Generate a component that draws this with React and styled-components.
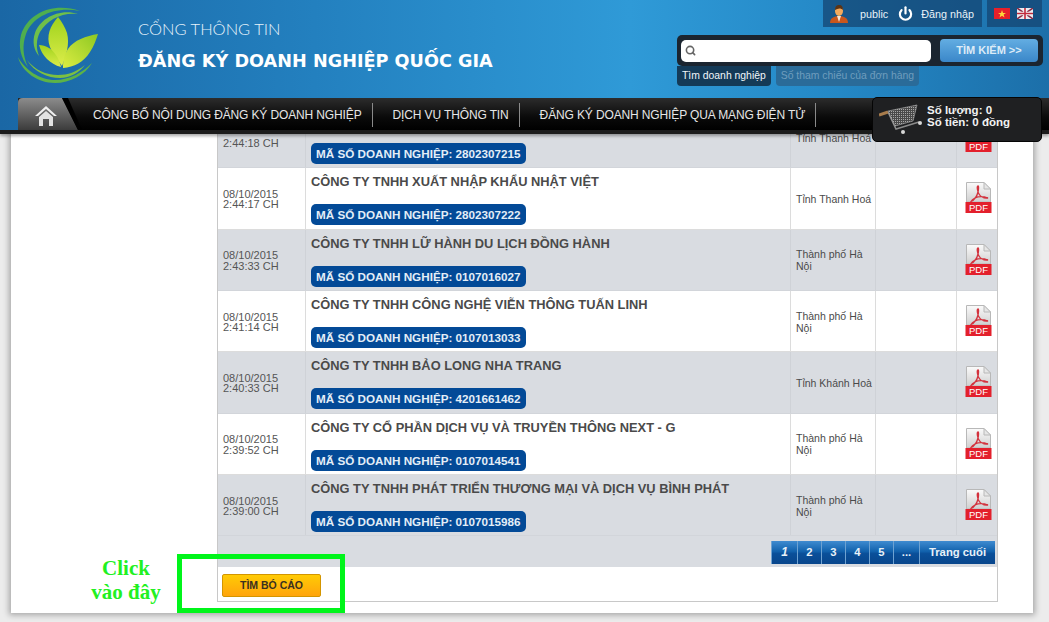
import React from 'react'
import styled, { createGlobalStyle } from 'styled-components'
import { Power, Search } from 'lucide-react'

const GlobalStyle = createGlobalStyle`
  html, body {
    margin: 0;
    padding: 0;
    background: #ececec;
    font-family: 'Liberation Sans', Arial, sans-serif;
  }
`

const Page = styled.div`
  position: relative;
  width: 1049px;
  height: 622px;
  overflow: hidden;
`

const Header = styled.header`
  position: relative;
  z-index: 2;
  height: 130px;
  background: linear-gradient(90deg, #1a67a5 0%, #2380bf 30%, #2f9ad7 60%, #2488c6 80%, #1c6fa9 100%);
  border-bottom: 4px solid #1c1c1c;
  box-shadow: 0 2px 3px rgba(0, 0, 0, 0.35);
`

const TopBar = styled.div`
  display: flex;
  height: 98px;
`

const LogoMark = styled.svg`
  flex: none;
  width: 110px;
  height: 98px;
`

const Brand = styled.div`
  margin-left: 28px;
  padding-top: 19px;
  color: #fff;
`

const BrandSmall = styled.div`
  font-family: Lato, sans-serif;
  font-weight: 300;
  font-size: 16.5px;
  line-height: 20px;
  color: #e6f2fa;
`

const BrandBig = styled.div`
  margin-top: 11px;
  font-family: 'DejaVu Sans', sans-serif;
  font-weight: 700;
  font-size: 17.65px;
  line-height: 22px;
`

const RightBlock = styled.div`
  margin-left: auto;
  width: 366px;
  margin-right: 6px;
`

const UserRow = styled.div`
  display: flex;
  justify-content: flex-end;
  gap: 5px;
  height: 27px;
  margin: 0 1px 8px 0;
`

const UserBox = styled.div`
  display: flex;
  align-items: center;
  width: 159px;
  padding-left: 7px;
  box-sizing: border-box;
  background: rgba(20, 70, 115, 0.75);
  color: #e8f1f8;
  font-size: 10.8px;
`

const UserName = styled.span`
  margin-left: 12px;
  margin-right: 10px;
`

const LoginLink = styled.span`
  margin-left: 8px;
`

const FlagBox = styled.div`
  display: flex;
  align-items: center;
  gap: 7px;
  width: 55px;
  padding-left: 7px;
  box-sizing: border-box;
  background: rgba(20, 70, 115, 0.75);
`

const SearchBar = styled.div`
  display: flex;
  align-items: center;
  height: 31px;
  padding: 0 5px 0 4px;
  box-sizing: border-box;
  background: #1b2530;
  border-radius: 5px;
`

const SearchInput = styled.div`
  display: flex;
  align-items: center;
  width: 250px;
  height: 22px;
  padding-left: 4px;
  box-sizing: border-box;
  background: #fff;
  border-radius: 5px;
  color: #666;
`

const SearchButton = styled.div`
  margin-left: 9px;
  width: 98px;
  height: 23px;
  border-radius: 4px;
  background: linear-gradient(180deg, #63ade2, #3a87c9);
  color: #dcebf7;
  font-size: 11px;
  font-weight: 700;
  line-height: 23px;
  text-align: center;
`

const SearchTabs = styled.div`
  display: flex;
  gap: 5px;
`

const SearchTab = styled.div`
  height: 20px;
  padding: 0 5px;
  border-radius: 0 0 4px 4px;
  font-size: 10.4px;
  line-height: 20px;
  background: ${p => (p.$active ? '#143a57' : '#2a6b99')};
  color: ${p => (p.$active ? '#f0f6fa' : '#6f9dbd')};
`

const Nav = styled.nav`
  display: flex;
  align-items: flex-start;
  height: 32px;
  margin-left: 18px;
  background: linear-gradient(180deg, #2c2c2c 0%, #0a0a0a 60%, #000 100%);
`

const HomeTab = styled.div`
  flex: none;
  display: flex;
  width: 64px;
  height: 32px;
  margin-right: 1px;
`

const HomeIcon = styled.svg`
  width: 64px;
  height: 32px;
`

const NavItem = styled.div`
  padding: 0 10px;
  margin: 5px 10px 0 0;
  border-right: 1px solid #8a8a8a;
  height: 24px;
  line-height: 25px;
  font-size: 12px;
  letter-spacing: -0.13px;
  color: #e6e6e6;
  white-space: nowrap;
`

const CartBox = styled.div`
  position: absolute;
  top: 97px;
  left: 872px;
  display: flex;
  align-items: center;
  width: 170px;
  height: 45px;
  box-sizing: border-box;
  padding-left: 6px;
  background: #1f2022;
  border: 1px solid #050505;
  border-radius: 5px;
  color: #f2f2f2;
  font-size: 11.5px;
  font-weight: 700;
  line-height: 12px;
`

const CartText = styled.div`
  margin-left: 4px;
  padding-bottom: 7px;
`

const Sheet = styled.main`
  margin: 0 16px 0 11px;
  height: 479px;
  padding-left: 206px;
  padding-right: 35px;
  background: #fff;
  box-shadow: 0 0 6px 2px rgba(0, 0, 0, 0.3);
`

const Panel = styled.section`
  display: flow-root;
  height: 468px;
  border: 1px solid #c8c8c8;
  border-top: 0;
  box-sizing: border-box;
  width: 781px;
`

const RowList = styled.div`
  margin-top: -27px;
`

const Row = styled.div`
  display: grid;
  grid-template-columns: 88px 485px 85px 81px 1fr;
  height: 61.33px;
  background: ${p => (p.$shaded ? '#d9dce1' : '#fff')};
  border-bottom: 1px solid ${p => (p.$shaded ? '#d2d5da' : '#dcdcdc')};
  box-sizing: border-box;
`

const Cell = styled.div`
  display: flex;
  align-items: center;
  padding: 1px 0 0 5px;
  border-right: 1px solid ${p => (p.$shaded ? '#cfd2d7' : '#dcdcdc')};
  color: #4a4a4a;
  font-size: 10.5px;
  line-height: 12px;
`

const DateText = styled.div`
  padding-top: 1px;
  font-size: 11px;
  line-height: 10.5px;
  color: #555;
`

const DateLine = styled.div`
  height: 10.5px;
`

const NameCell = styled.div`
  padding: 6px 0 0 5px;
  border-right: 1px solid ${p => (p.$shaded ? '#cfd2d7' : '#dcdcdc')};
`

const CompanyName = styled.div`
  height: 30px;
  font-size: 12.85px;
  font-weight: 700;
  line-height: 16px;
  color: #4a4a4a;
`

const CodeBadge = styled.span`
  display: inline-block;
  height: 21px;
  padding: 0 5px;
  border-radius: 5px;
  background: #034a97;
  color: #e4eef7;
  font-size: 11.7px;
  font-weight: 700;
  line-height: 21px;
`

const PdfCell = styled.div`
  display: flex;
  align-items: center;
  padding: 0 0 0 8px;
`

const PdfGlyph = styled.svg`
  width: 27px;
  height: 32px;
`

const Pager = styled.div`
  display: flex;
  justify-content: flex-end;
  height: 31px;
  padding: 5px 2px 0 0;
  box-sizing: border-box;
  background: #d9dce1;
`

const PageLink = styled.div`
  width: ${p => p.$width || 24}px;
  height: 23px;
  border-left: 1px solid #6ea2d2;
  box-sizing: border-box;
  background: linear-gradient(180deg, #3f8bd0 0%, #1262ad 45%, #0a4f99 55%, #08468c 100%);
  color: #e8f1f8;
  font-size: ${p => (p.$current ? 12 : 11.3)}px;
  font-weight: 700;
  font-style: ${p => (p.$current ? 'italic' : 'normal')};
  line-height: 22px;
  text-align: center;
`

const PanelFooter = styled.div`
  padding: 7px 0 0 4px;
`

const ReportButton = styled.div`
  width: 99px;
  height: 23px;
  box-sizing: border-box;
  border: 1px solid #d39500;
  border-radius: 2px;
  background: linear-gradient(180deg, #ffcb05, #ffa40c);
  color: #3a3020;
  font-size: 10.5px;
  font-weight: 700;
  line-height: 21px;
  text-align: center;
`

const Highlight = styled.div`
  position: absolute;
  left: 177px;
  top: 554px;
  width: 168px;
  height: 59px;
  box-sizing: border-box;
  border: 5px solid #00f51a;
`

const Callout = styled.div`
  position: absolute;
  left: 76px;
  top: 556px;
  width: 100px;
  font-family: 'Liberation Serif', serif;
  font-size: 21px;
  font-weight: 700;
  line-height: 24px;
  text-align: center;
  color: #22f022;
`

const rows = [
  { date: '', time: '2:44:18 CH', name: '', code: '2802307215', city: 'Tỉnh Thanh Hoá', shaded: true },
  { date: '08/10/2015', time: '2:44:17 CH', name: 'CÔNG TY TNHH XUẤT NHẬP KHẨU NHẬT VIỆT', code: '2802307222', city: 'Tỉnh Thanh Hoá' },
  { date: '08/10/2015', time: '2:43:33 CH', name: 'CÔNG TY TNHH LỮ HÀNH DU LỊCH ĐỒNG HÀNH', code: '0107016027', city: 'Thành phố Hà Nội', shaded: true },
  { date: '08/10/2015', time: '2:41:14 CH', name: 'CÔNG TY TNHH CÔNG NGHỆ VIỄN THÔNG TUẤN LINH', code: '0107013033', city: 'Thành phố Hà Nội' },
  { date: '08/10/2015', time: '2:40:33 CH', name: 'CÔNG TY TNHH BẢO LONG NHA TRANG', code: '4201661462', city: 'Tỉnh Khánh Hoà', shaded: true },
  { date: '08/10/2015', time: '2:39:52 CH', name: 'CÔNG TY CỔ PHẦN DỊCH VỤ VÀ TRUYỀN THÔNG NEXT - G', code: '0107014541', city: 'Thành phố Hà Nội' },
  { date: '08/10/2015', time: '2:39:00 CH', name: 'CÔNG TY TNHH PHÁT TRIỂN THƯƠNG MẠI VÀ DỊCH VỤ BÌNH PHÁT', code: '0107015986', city: 'Thành phố Hà Nội', shaded: true },
]

const Logo = () => (
  <LogoMark viewBox="0 0 110 98">
    <defs>
      <linearGradient id="leafA" x1="0" y1="0" x2="0" y2="1">
        <stop offset="0" stopColor="#9fd31c" />
        <stop offset="1" stopColor="#dcec4a" />
      </linearGradient>
      <linearGradient id="leafB" x1="1" y1="0" x2="0" y2="1">
        <stop offset="0" stopColor="#8cc822" />
        <stop offset="1" stopColor="#dcec42" />
      </linearGradient>
    </defs>
    <path d="M80 11C55 2 28 12 21 35 18 47 21 58 28 67 23 56 22 45 26 34 33 15 57 6 80 11Z" fill="#4faf4e" />
    <path d="M78 14C60 8 40 18 35 33 32 42 34 50 39 56 36 48 36 40 40 32 47 20 62 12 78 14Z" fill="#6fc04a" />
    <path d="M18 57C22 72 38 83 55 83 70 83 85 75 92 63 83 72 70 80 55 80 40 80 25 70 18 57Z" fill="#5cb347" />
    <path d="M27 60C34 72 48 78 60 78 70 78 80 72 85 65 76 72 68 75 58 75 46 75 35 70 27 60Z" fill="#7cc041" />
    <path d="M58 17C50 26 46 36 50 47 53 55 58 60 62 66 66 56 70 44 67 33 65 27 62 22 58 17Z" fill="url(#leafA)" />
    <path d="M39 45C42 56 50 64 61 67 59 58 54 51 49 48 46 46 42 45 39 45Z" fill="url(#leafA)" />
    <path d="M98 34C86 36 74 40 68 49 64 55 63 61 63 68 74 67 84 62 90 52 94 46 96 40 98 34Z" fill="url(#leafB)" />
  </LogoMark>
)

const Home = () => (
  <HomeIcon viewBox="0 0 64 32">
    <defs>
      <linearGradient id="tabFill" x1="0" y1="0" x2="0" y2="1">
        <stop offset="0" stopColor="#8c8c8c" />
        <stop offset="1" stopColor="#3c3c3c" />
      </linearGradient>
    </defs>
    <path d="M5 0H44L60 32H0V5Q0 0 5 0Z" fill="url(#tabFill)" />
    <path d="M44 0H50L64 32H60Z" fill="#000" />
    <path d="M28 8L17 18H20L28 11 36 18H39Z" fill="#f0f0f0" />
    <path d="M21 19L28 13 35 19V28H31V21H25V28H21Z" fill="#e2e2e2" />
  </HomeIcon>
)

const Avatar = () => (
  <svg width="18" height="20" viewBox="0 0 18 20">
    <path d="M0 19C0 14 4 12 9 12 14 12 18 14 18 19Z" fill="#c8561c" />
    <path d="M7 12H11L9 18Z" fill="#f2e6d8" />
    <ellipse cx="9" cy="7" rx="4" ry="5" fill="#f2a95c" />
    <path d="M5 6C5 2 7 1 9 1 12 1 13 3 13 6 11 4 8 4 5 6Z" fill="#5b3416" />
  </svg>
)

const VietnamFlag = () => (
  <svg width="16" height="11" viewBox="0 0 16 11">
    <rect width="16" height="11" fill="#e8202a" />
    <path d="M8 2L9 5H12L9.6 6.6 10.5 9.5 8 7.8 5.5 9.5 6.4 6.6 4 5H7Z" fill="#ffd83a" />
  </svg>
)

const UkFlag = () => (
  <svg width="16" height="11" viewBox="0 0 16 11">
    <rect width="16" height="11" fill="#e9e9ef" />
    <path d="M0 0L16 11M16 0L0 11" stroke="#8b2a44" strokeWidth="1.5" />
    <path d="M8 0V11M0 5.5H16" stroke="#f4f4f4" strokeWidth="3.4" />
    <path d="M8 0V11M0 5.5H16" stroke="#c22a3c" strokeWidth="1.6" />
  </svg>
)

const Cart = () => (
  <svg width="44" height="34" viewBox="0 0 44 34">
    <defs>
      <pattern id="mesh" width="2" height="2" patternUnits="userSpaceOnUse">
        <rect width="2" height="2" fill="#4a4a4a" />
        <rect width="1" height="1" fill="#a8a8a8" />
      </pattern>
    </defs>
    <path d="M9 9L17 26 40 19" fill="none" stroke="#8a8a8a" strokeWidth="1.5" />
    <path d="M0 12L9 9" stroke="#a87c4c" strokeWidth="3" />
    <path d="M9 8L38 2 34 18 16 23Z" fill="url(#mesh)" stroke="#b4b4b4" strokeWidth="0.6" />
    <circle cx="24" cy="29" r="2" fill="#d8d8d8" />
    <circle cx="41" cy="20" r="2" fill="#d8d8d8" />
  </svg>
)

const Pdf = () => (
  <PdfGlyph viewBox="0 0 27 32">
    <defs>
      <linearGradient id="sheetFill" x1="0" y1="0" x2="0" y2="1">
        <stop offset="0" stopColor="#fbfbfb" />
        <stop offset="1" stopColor="#cfcfcf" />
      </linearGradient>
    </defs>
    <path d="M1.5 0.5H19L25.5 7V20H1.5Z" fill="url(#sheetFill)" stroke="#b8b8b8" />
    <path d="M19 0.5V7H25.5Z" fill="#e6e6e6" stroke="#b8b8b8" />
    <path d="M13 4C11.5 4 12.5 10 14 12 15.5 14.5 19 16.5 23 16 19 14.5 14 14 10 16 8 17 6.5 18.5 6 19.5 9 18 12 14 13 10 13.5 8 14 4 13 4Z" fill="none" stroke="#d3313c" strokeWidth="1.3" />
    <rect x="0.5" y="20" width="26" height="11" fill="#e3202c" />
    <text x="13.5" y="29" fontFamily="Liberation Sans, sans-serif" fontSize="9.5" fill="#fff" textAnchor="middle">PDF</text>
  </PdfGlyph>
)

export default function App() {
  return (
    <Page>
      <GlobalStyle />
      <Header>
        <TopBar>
          <Logo />
          <Brand>
            <BrandSmall>CỔNG THÔNG TIN</BrandSmall>
            <BrandBig>ĐĂNG KÝ DOANH NGHIỆP QUỐC GIA</BrandBig>
          </Brand>
          <RightBlock>
            <UserRow>
              <UserBox>
                <Avatar />
                <UserName>public</UserName>
                <Power size={15} strokeWidth={3.5} color="#fff" />
                <LoginLink>Đăng nhập</LoginLink>
              </UserBox>
              <FlagBox>
                <VietnamFlag />
                <UkFlag />
              </FlagBox>
            </UserRow>
            <SearchBar>
              <SearchInput>
                <Search size={11} strokeWidth={3.5} />
              </SearchInput>
              <SearchButton>TÌM KIẾM &gt;&gt;</SearchButton>
            </SearchBar>
            <SearchTabs>
              <SearchTab $active>Tìm doanh nghiệp</SearchTab>
              <SearchTab>Số tham chiếu của đơn hàng</SearchTab>
            </SearchTabs>
          </RightBlock>
        </TopBar>
        <Nav>
          <HomeTab>
            <Home />
          </HomeTab>
          <NavItem>CÔNG BỐ NỘI DUNG ĐĂNG KÝ DOANH NGHIỆP</NavItem>
          <NavItem>DỊCH VỤ THÔNG TIN</NavItem>
          <NavItem>ĐĂNG KÝ DOANH NGHIỆP QUA MẠNG ĐIỆN TỬ</NavItem>
        </Nav>
        <CartBox>
          <Cart />
          <CartText>
            <div>Số lượng: 0</div>
            <div>Số tiền: 0 đồng</div>
          </CartText>
        </CartBox>
      </Header>

      <Sheet>
        <Panel>
          <RowList>
            {rows.map(row => (
              <Row key={row.code} $shaded={row.shaded}>
                <Cell $shaded={row.shaded}>
                  <DateText>
                    <DateLine>{row.date}</DateLine>
                    <DateLine>{row.time}</DateLine>
                  </DateText>
                </Cell>
                <NameCell $shaded={row.shaded}>
                  <CompanyName>{row.name}</CompanyName>
                  <CodeBadge>MÃ SỐ DOANH NGHIỆP: {row.code}</CodeBadge>
                </NameCell>
                <Cell $shaded={row.shaded}>{row.city}</Cell>
                <Cell $shaded={row.shaded} />
                <PdfCell>
                  <Pdf />
                </PdfCell>
              </Row>
            ))}
          </RowList>
          <Pager>
            <PageLink $current $width={26}>1</PageLink>
            <PageLink>2</PageLink>
            <PageLink>3</PageLink>
            <PageLink>4</PageLink>
            <PageLink>5</PageLink>
            <PageLink $width={26}>...</PageLink>
            <PageLink $width={76}>Trang cuối</PageLink>
          </Pager>
          <PanelFooter>
            <ReportButton>TÌM BÓ CÁO</ReportButton>
          </PanelFooter>
        </Panel>
      </Sheet>

      <Callout>
        Click
        <br />
        vào đây
      </Callout>
      <Highlight />
    </Page>
  )
}
